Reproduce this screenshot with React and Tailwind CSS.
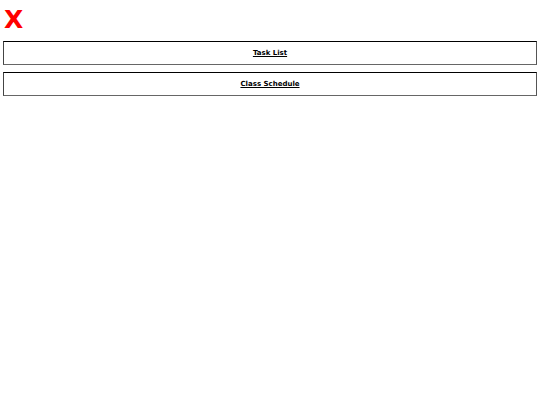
export default function App() {
  return (
    <div className="min-h-[405px] w-[540px] bg-white" style={{ fontFamily: '"DejaVu Sans", sans-serif' }}>
      <div className="pl-[4px] pt-[7px] text-[25px] font-bold leading-none text-[#ff0000]">X</div>
      <div className="mt-[9px] flex flex-col gap-[7px] px-[3px]">
        {["Task List", "Class Schedule"].map((t) => (
          <div
            key={t}
            className="flex h-[24px] items-center justify-center border border-t-black border-l-[#444] border-r-[#555] border-b-[#666] text-[7px] font-bold text-black underline"
          >
            {t}
          </div>
        ))}
      </div>
    </div>
  );
}
